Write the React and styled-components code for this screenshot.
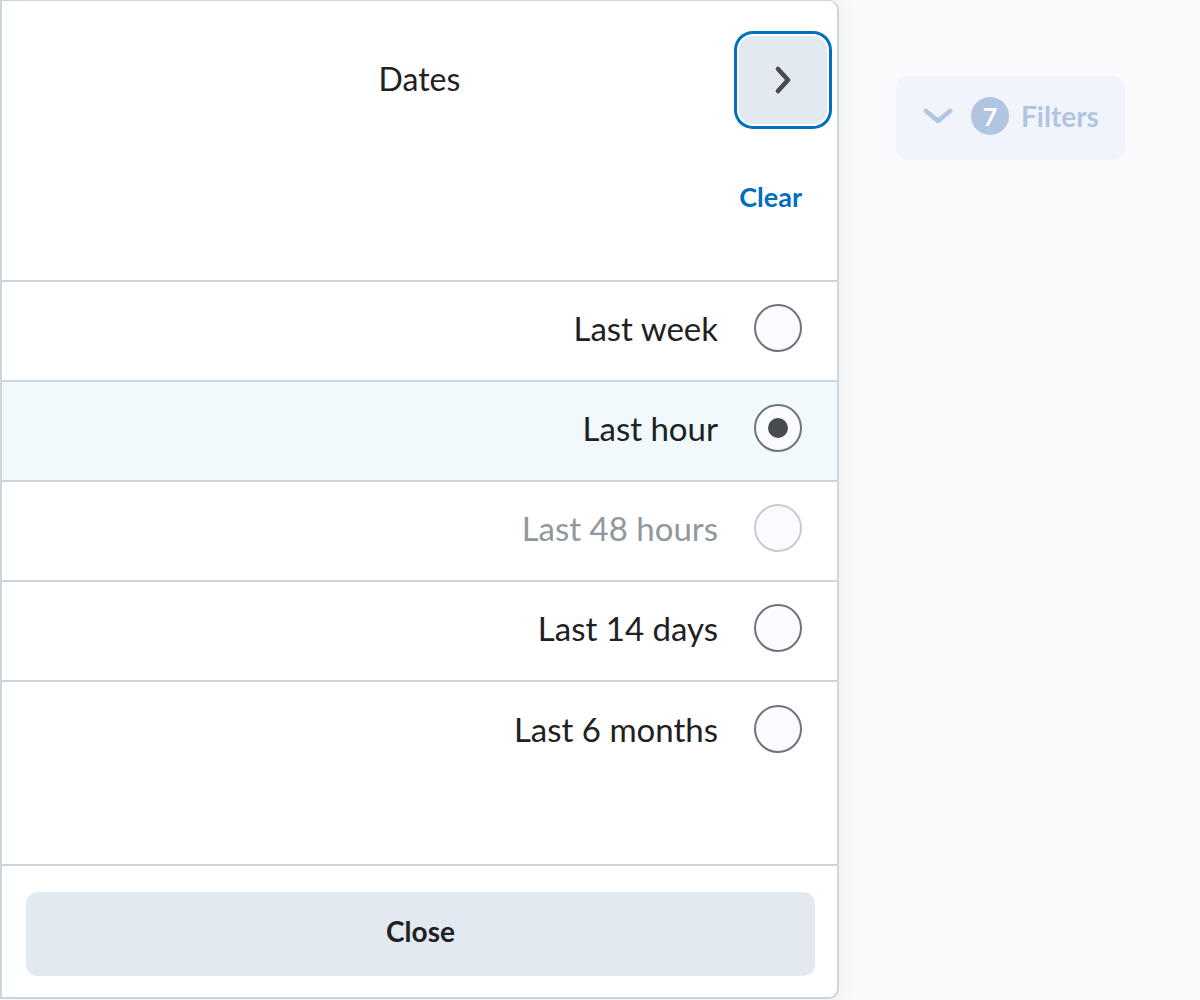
import React from "react";
import styled, { createGlobalStyle } from "styled-components";

const GlobalStyle = createGlobalStyle`
  html, body {
    margin: 0;
    padding: 0;
    background: #f9fafc;
    font-family: Lato, "Open Sans", sans-serif;
    color: #202122;
  }
`;

const Page = styled.div`
  display: flex;
  flex-direction: row;
  align-items: flex-start;
  width: 1200px;
  height: 1000px;
  overflow: hidden;
`;

const Panel = styled.div`
  box-sizing: border-box;
  width: 839px;
  height: 999px;
  display: flex;
  flex-direction: column;
  background: #ffffff;
  border: 2px solid #cdd5dc;
  border-top-width: 1px;
  border-radius: 0 10px 10px 0;
  box-shadow: 6px 0 18px rgba(86, 90, 92, 0.06);
  flex-shrink: 0;
`;

const Header = styled.div`
  display: flex;
  flex-direction: column;
  height: 281px;
  padding: 30px 6px 0 0;
  box-sizing: border-box;
  border-bottom: 2px solid #cdd5dc;
`;

const TitleRow = styled.div`
  display: flex;
  align-items: center;
  position: relative;
  height: 98px;
  justify-content: flex-end;
`;

const Title = styled.h1`
  position: absolute;
  left: 6px;
  right: 0;
  top: 50%;
  transform: translateY(-53%);
  margin: 0;
  text-align: center;
  font-size: 32px;
  font-weight: 400;
  color: #202122;
  pointer-events: none;
`;

const IconButton = styled.button`
  width: 88px;
  height: 88px;
  margin-right: 4px;
  border: none;
  border-radius: 14px;
  background: #e3e9f1;
  color: #494c4e;
  display: flex;
  align-items: center;
  justify-content: center;
  box-shadow: 0 0 0 2px #ffffff, 0 0 0 5px #006fbf;
  cursor: pointer;
`;

const ClearRow = styled.div`
  display: flex;
  justify-content: flex-end;
  padding: 51px 29px 0 0;
`;

const ClearLink = styled.button`
  border: none;
  background: none;
  padding: 0;
  font-family: inherit;
  font-size: 27px;
  font-weight: 700;
  color: #006fbf;
  cursor: pointer;
`;

const List = styled.div`
  display: flex;
  flex-direction: column;
`;

const Row = styled.label`
  display: flex;
  align-items: center;
  justify-content: flex-end;
  gap: 36px;
  height: 100px;
  padding: 0 35px 6px 0;
  box-sizing: border-box;
  border-bottom: ${(p) => (p.$last ? "none" : "2px solid #cdd5dc")};
  background: ${(p) => (p.$selected ? "#f1f9fd" : "#ffffff")};
  font-size: 33px;
  color: ${(p) => (p.$disabled ? "#90989d" : "#202122")};
`;

const Radio = styled.span`
  box-sizing: border-box;
  width: 48px;
  height: 48px;
  border-radius: 50%;
  border: 2px solid ${(p) => (p.$disabled ? "#c7ccd0" : "#6e7477")};
  background: #f9fbff;
  display: flex;
  align-items: center;
  justify-content: center;
  flex-shrink: 0;

  &::after {
    content: "";
    display: ${(p) => (p.$checked ? "block" : "none")};
    width: 20px;
    height: 20px;
    border-radius: 50%;
    background: #494c4e;
  }
`;

const Spacer = styled.div`
  flex: 1;
`;

const Footer = styled.div`
  border-top: 2px solid #cdd5dc;
  padding: 26px 22px 21px 24px;
`;

const CloseButton = styled.button`
  width: 100%;
  height: 84px;
  padding-bottom: 8px;
  border: none;
  border-radius: 12px;
  background: #e3e9f1;
  font-family: inherit;
  font-size: 28px;
  font-weight: 700;
  color: #202122;
  cursor: pointer;
`;

const Side = styled.div`
  padding: 76px 0 0 57px;
`;

const FilterButton = styled.button`
  display: flex;
  align-items: center;
  gap: 18px;
  height: 84px;
  padding: 0 26px 4px 27px;
  border: none;
  border-radius: 12px;
  background: #f1f5fb;
  font-family: inherit;
  font-size: 28px;
  font-weight: 700;
  color: #b1c5e0;
`;

const Badge = styled.span`
  width: 38px;
  height: 38px;
  border-radius: 50%;
  background: #b1c5e0;
  color: #ffffff;
  font-size: 25px;
  font-weight: 700;
  display: flex;
  align-items: center;
  justify-content: center;
`;

const BadgeLabel = styled.span`
  display: flex;
  align-items: center;
  gap: 12px;
`;

const options = [
  { label: "Last week" },
  { label: "Last hour", checked: true },
  { label: "Last 48 hours", disabled: true },
  { label: "Last 14 days" },
  { label: "Last 6 months" },
];

const App = () => {
  return (
    <Page>
      <GlobalStyle />
      <Panel>
        <Header>
          <TitleRow>
            <Title>Dates</Title>
            <IconButton aria-label="Back">
              <svg width="18" height="30" viewBox="0 0 18 30" fill="none">
                <path d="M4 4l10 11-10 11" stroke="currentColor" strokeWidth="4.6" strokeLinecap="round" strokeLinejoin="round" />
              </svg>
            </IconButton>
          </TitleRow>
          <ClearRow>
            <ClearLink>Clear</ClearLink>
          </ClearRow>
        </Header>
        <List>
          {options.map((o, i) => (
            <Row
              key={o.label}
              $selected={o.checked}
              $disabled={o.disabled}
              $last={i === options.length - 1}
            >
              <span>{o.label}</span>
              <Radio $checked={o.checked} $disabled={o.disabled} />
            </Row>
          ))}
        </List>
        <Spacer />
        <Footer>
          <CloseButton>Close</CloseButton>
        </Footer>
      </Panel>
      <Side>
        <FilterButton>
          <svg width="30" height="16" viewBox="0 0 30 16" fill="none">
            <path d="M3 3l12 10 12-10" stroke="currentColor" strokeWidth="4.6" strokeLinecap="round" strokeLinejoin="round" />
          </svg>
          <BadgeLabel>
            <Badge>7</Badge>
            Filters
          </BadgeLabel>
        </FilterButton>
      </Side>
    </Page>
  );
};

export default App;
